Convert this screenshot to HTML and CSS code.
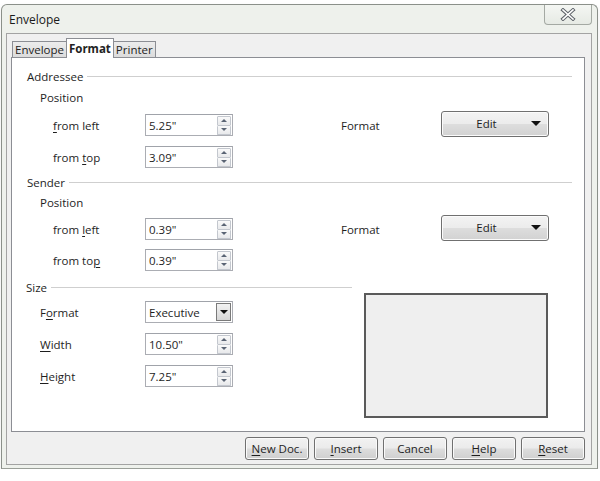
FILE: index.html
```html
<!DOCTYPE html>
<html>
<head>
<meta charset="utf-8">
<title>Envelope</title>
<link rel="stylesheet" href="styles.css">
</head>
<body>
<div class="window">
  <div class="titlebar">
    <span class="title">Envelope</span>
    <div class="close">
      <svg width="16" height="13" viewBox="0 0 16 13">
        <path d="M3 2 L13 11 M13 2 L3 11" stroke="#5d6268" stroke-width="3.6" stroke-linecap="square" fill="none"/>
        <path d="M3 2 L13 11 M13 2 L3 11" stroke="#ffffff" stroke-width="1.6" stroke-linecap="square" fill="none"/>
      </svg>
    </div>
  </div>
  <div class="client">
    <div class="tabs">
      <div class="tab">Envelope</div>
      <div class="tab active">Format</div>
      <div class="tab">Printer</div>
    </div>
    <div class="panel">
      <div class="head">Addressee</div>
      <div class="sub">Position</div>
      <div class="row first">
        <span class="lbl"><u>f</u>rom left</span>
        <div class="field"><span class="val">5.25"</span><span class="spin"><i class="up"></i><i class="down"></i></span></div>
        <span class="flbl">Format</span>
        <div class="edit"><span class="etext">Edit</span><i class="caret"></i></div>
      </div>
      <div class="row">
        <span class="lbl">from <u>t</u>op</span>
        <div class="field"><span class="val">3.09"</span><span class="spin"><i class="up"></i><i class="down"></i></span></div>
      </div>

      <div class="head sender">Sender</div>
      <div class="sub s2">Position</div>
      <div class="row first2">
        <span class="lbl">from <u>l</u>eft</span>
        <div class="field"><span class="val">0.39"</span><span class="spin"><i class="up"></i><i class="down"></i></span></div>
        <span class="flbl">Format</span>
        <div class="edit"><span class="etext">Edit</span><i class="caret"></i></div>
      </div>
      <div class="row second2">
        <span class="lbl">from to<u>p</u></span>
        <div class="field"><span class="val">0.39"</span><span class="spin"><i class="up"></i><i class="down"></i></span></div>
      </div>

      <div class="size">
        <div class="size-left">
          <div class="head small">Size</div>
          <div class="row srow first3">
            <span class="lbl wide">F<u>o</u>rmat</span>
            <div class="field"><span class="val">Executive</span><span class="drop"><i class="caret small"></i></span></div>
          </div>
          <div class="row srow">
            <span class="lbl wide"><u>W</u>idth</span>
            <div class="field"><span class="val">10.50"</span><span class="spin"><i class="up"></i><i class="down"></i></span></div>
          </div>
          <div class="row srow">
            <span class="lbl wide"><u>H</u>eight</span>
            <div class="field"><span class="val">7.25"</span><span class="spin"><i class="up"></i><i class="down"></i></span></div>
          </div>
        </div>
        <div class="preview"></div>
      </div>
    </div>
    <div class="buttons">
      <div class="btn"><u>N</u>ew Doc.</div>
      <div class="btn"><u>I</u>nsert</div>
      <div class="btn">Cancel</div>
      <div class="btn"><u>H</u>elp</div>
      <div class="btn"><u>R</u>eset</div>
    </div>
  </div>
</div>
</body>
</html>
```

FILE: styles.css
```css
* { box-sizing: border-box; }

html, body {
  margin: 0;
  padding: 0;
  background: #ffffff;
}

body {
  font-family: "Open Sans", "Noto Sans", "Liberation Sans", sans-serif;
  font-size: 11.5px;
  color: #1e1e1e;
}

u { text-decoration: underline; text-underline-offset: 2px; }

.window {
  margin: 4px 0 0 1px;
  width: 597px;
  height: 465px;
  background: #eef1ec;
  border: 1px solid #8b908a;
  border-bottom-color: #9a9f98;
  border-radius: 6px 6px 0 0;
  padding: 0 5px 4px 4px;
  box-shadow: 0 3px 6px rgba(0, 0, 0, 0.08);
}

.titlebar {
  height: 28px;
  display: flex;
  justify-content: space-between;
  align-items: flex-start;
}

.title {
  font-size: 12px;
  margin: 7px 0 0 3px;
  line-height: 16px;
  color: #1a1a1a;
}

.close {
  width: 48px;
  height: 20px;
  border: 1px solid #a4a9a3;
  border-top: none;
  border-radius: 0 0 4px 4px;
  background: linear-gradient(#f4f6f3, #e6eae4);
  display: flex;
  align-items: center;
  justify-content: center;
}

.client {
  background: #f0f0f0;
  border: 1px solid #a3a3a3;
  padding: 4px 6px 4px 4px;
  height: 432px;
  display: flex;
  flex-direction: column;
}

.tabs {
  display: flex;
  align-items: flex-end;
  height: 19px;
  padding-left: 1px;
  position: relative;
  z-index: 1;
}

.tab {
  height: 16px;
  line-height: 15px;
  padding: 0 2px;
  border: 1px solid #8c8e94;
  border-bottom: none;
  background: linear-gradient(#ececec, #dcdcdc);
  font-size: 11.5px;
  color: #222;
}

.tab + .tab { border-left: none; }

.tab.active {
  height: 20px;
  margin-bottom: -1px;
  margin-left: -1px;
  margin-right: -1px;
  border-left: 1px solid #8c8e94;
  background: #ffffff;
  font-weight: bold;
  line-height: 19px;
  padding: 0 2px;
}

.tab.active + .tab { border-left: 1px solid #8c8e94; }

.panel {
  height: 375px;
  background: #ffffff;
  border: 1px solid #8c8e94;
  padding-top: 8px;
}

.head {
  display: flex;
  align-items: center;
  height: 20px;
  padding: 0 12px 0 15px;
  font-size: 11.5px;
}

.head::after {
  content: "";
  flex: 1;
  border-top: 1px solid #cfcfcf;
  margin-left: 4px;
  margin-top: 1px;
}

.head.sender { margin-top: 2px; }

.head.small { padding: 0 0 0 14px; }

.sub {
  height: 20px;
  line-height: 20px;
  padding-left: 28px;
  margin-top: 2px;
  font-size: 11.5px;
}

.sub.s2 { margin-top: 1px; }

.row {
  display: flex;
  align-items: center;
  height: 26px;
  padding-left: 41px;
  margin-top: 6px;
  font-size: 11.5px;
}

.row.first { margin-top: 4px; }
.row.first2 { margin-top: 3px; }
.row.second2 { margin-top: 5px; }
.row.srow { padding-left: 28px; }
.row.first3 { margin-top: 2px; }

.lbl { width: 92px; }
.lbl.wide { width: 105px; }

.field {
  width: 88px;
  height: 22px;
  border: 1px solid #abadb3;
  border-top-color: #a0a3aa;
  background: #ffffff;
  display: flex;
  align-items: center;
  justify-content: space-between;
  padding: 0 1px 0 3px;
}

.val { font-size: 11.5px; }

.spin {
  display: flex;
  flex-direction: column;
  width: 14px;
}

.spin i {
  display: block;
  height: 10px;
  border: 1px solid #c3c7ce;
  background: linear-gradient(#fafafa, #e8e9eb);
  position: relative;
  border-radius: 1px;
}

.spin i.down { border-top: none; height: 9px; }

.spin i::after {
  content: "";
  position: absolute;
  left: 3px;
  top: 2px;
  border-left: 3px solid transparent;
  border-right: 3px solid transparent;
}

.spin i.up::after { border-bottom: 3px solid #5a6474; }
.spin i.down::after { border-top: 3px solid #5a6474; top: 2px; }

.drop {
  width: 15px;
  height: 18px;
  border: 1px solid #7a7a7a;
  background: linear-gradient(#f2f2f2, #d6d6d6);
  display: flex;
  align-items: center;
  justify-content: center;
}

.flbl {
  margin-left: 108px;
  width: 100px;
}

.edit {
  width: 108px;
  height: 26px;
  border: 1px solid #707070;
  border-radius: 3px;
  background: linear-gradient(#f3f3f3 0%, #ececec 48%, #dddddd 52%, #d2d2d2 100%);
  display: flex;
  align-items: center;
  padding-right: 5px;
  box-shadow: inset 0 0 0 1px #fbfbfb;
  margin-top: -3px;
}

.etext {
  flex: 1;
  text-align: center;
  padding-left: 2px;
}

.caret {
  display: block;
  width: 0;
  height: 0;
  border-left: 5px solid transparent;
  border-right: 5px solid transparent;
  border-top: 5px solid #111;
  margin: 0 2px;
}

.caret.small {
  border-left-width: 4px;
  border-right-width: 4px;
  border-top-width: 4px;
  margin: 0;
}

.size {
  display: flex;
  margin-top: 4px;
}

.size-left { width: 340px; }

.preview {
  margin: 16px 0 0 12px;
  width: 184px;
  height: 125px;
  border: 2px solid #5a5a5a;
  background: #efefef;
}

.buttons {
  display: flex;
  justify-content: flex-end;
  gap: 5px;
  margin-top: 5px;
}

.btn {
  width: 64px;
  height: 23px;
  border: 1px solid #707070;
  border-radius: 3px;
  background: linear-gradient(#f2f2f2 0%, #ebebeb 48%, #dddddd 52%, #cfcfcf 100%);
  box-shadow: inset 0 0 0 1px #fafafa;
  display: flex;
  align-items: center;
  justify-content: center;
  font-size: 11.5px;
}
```
